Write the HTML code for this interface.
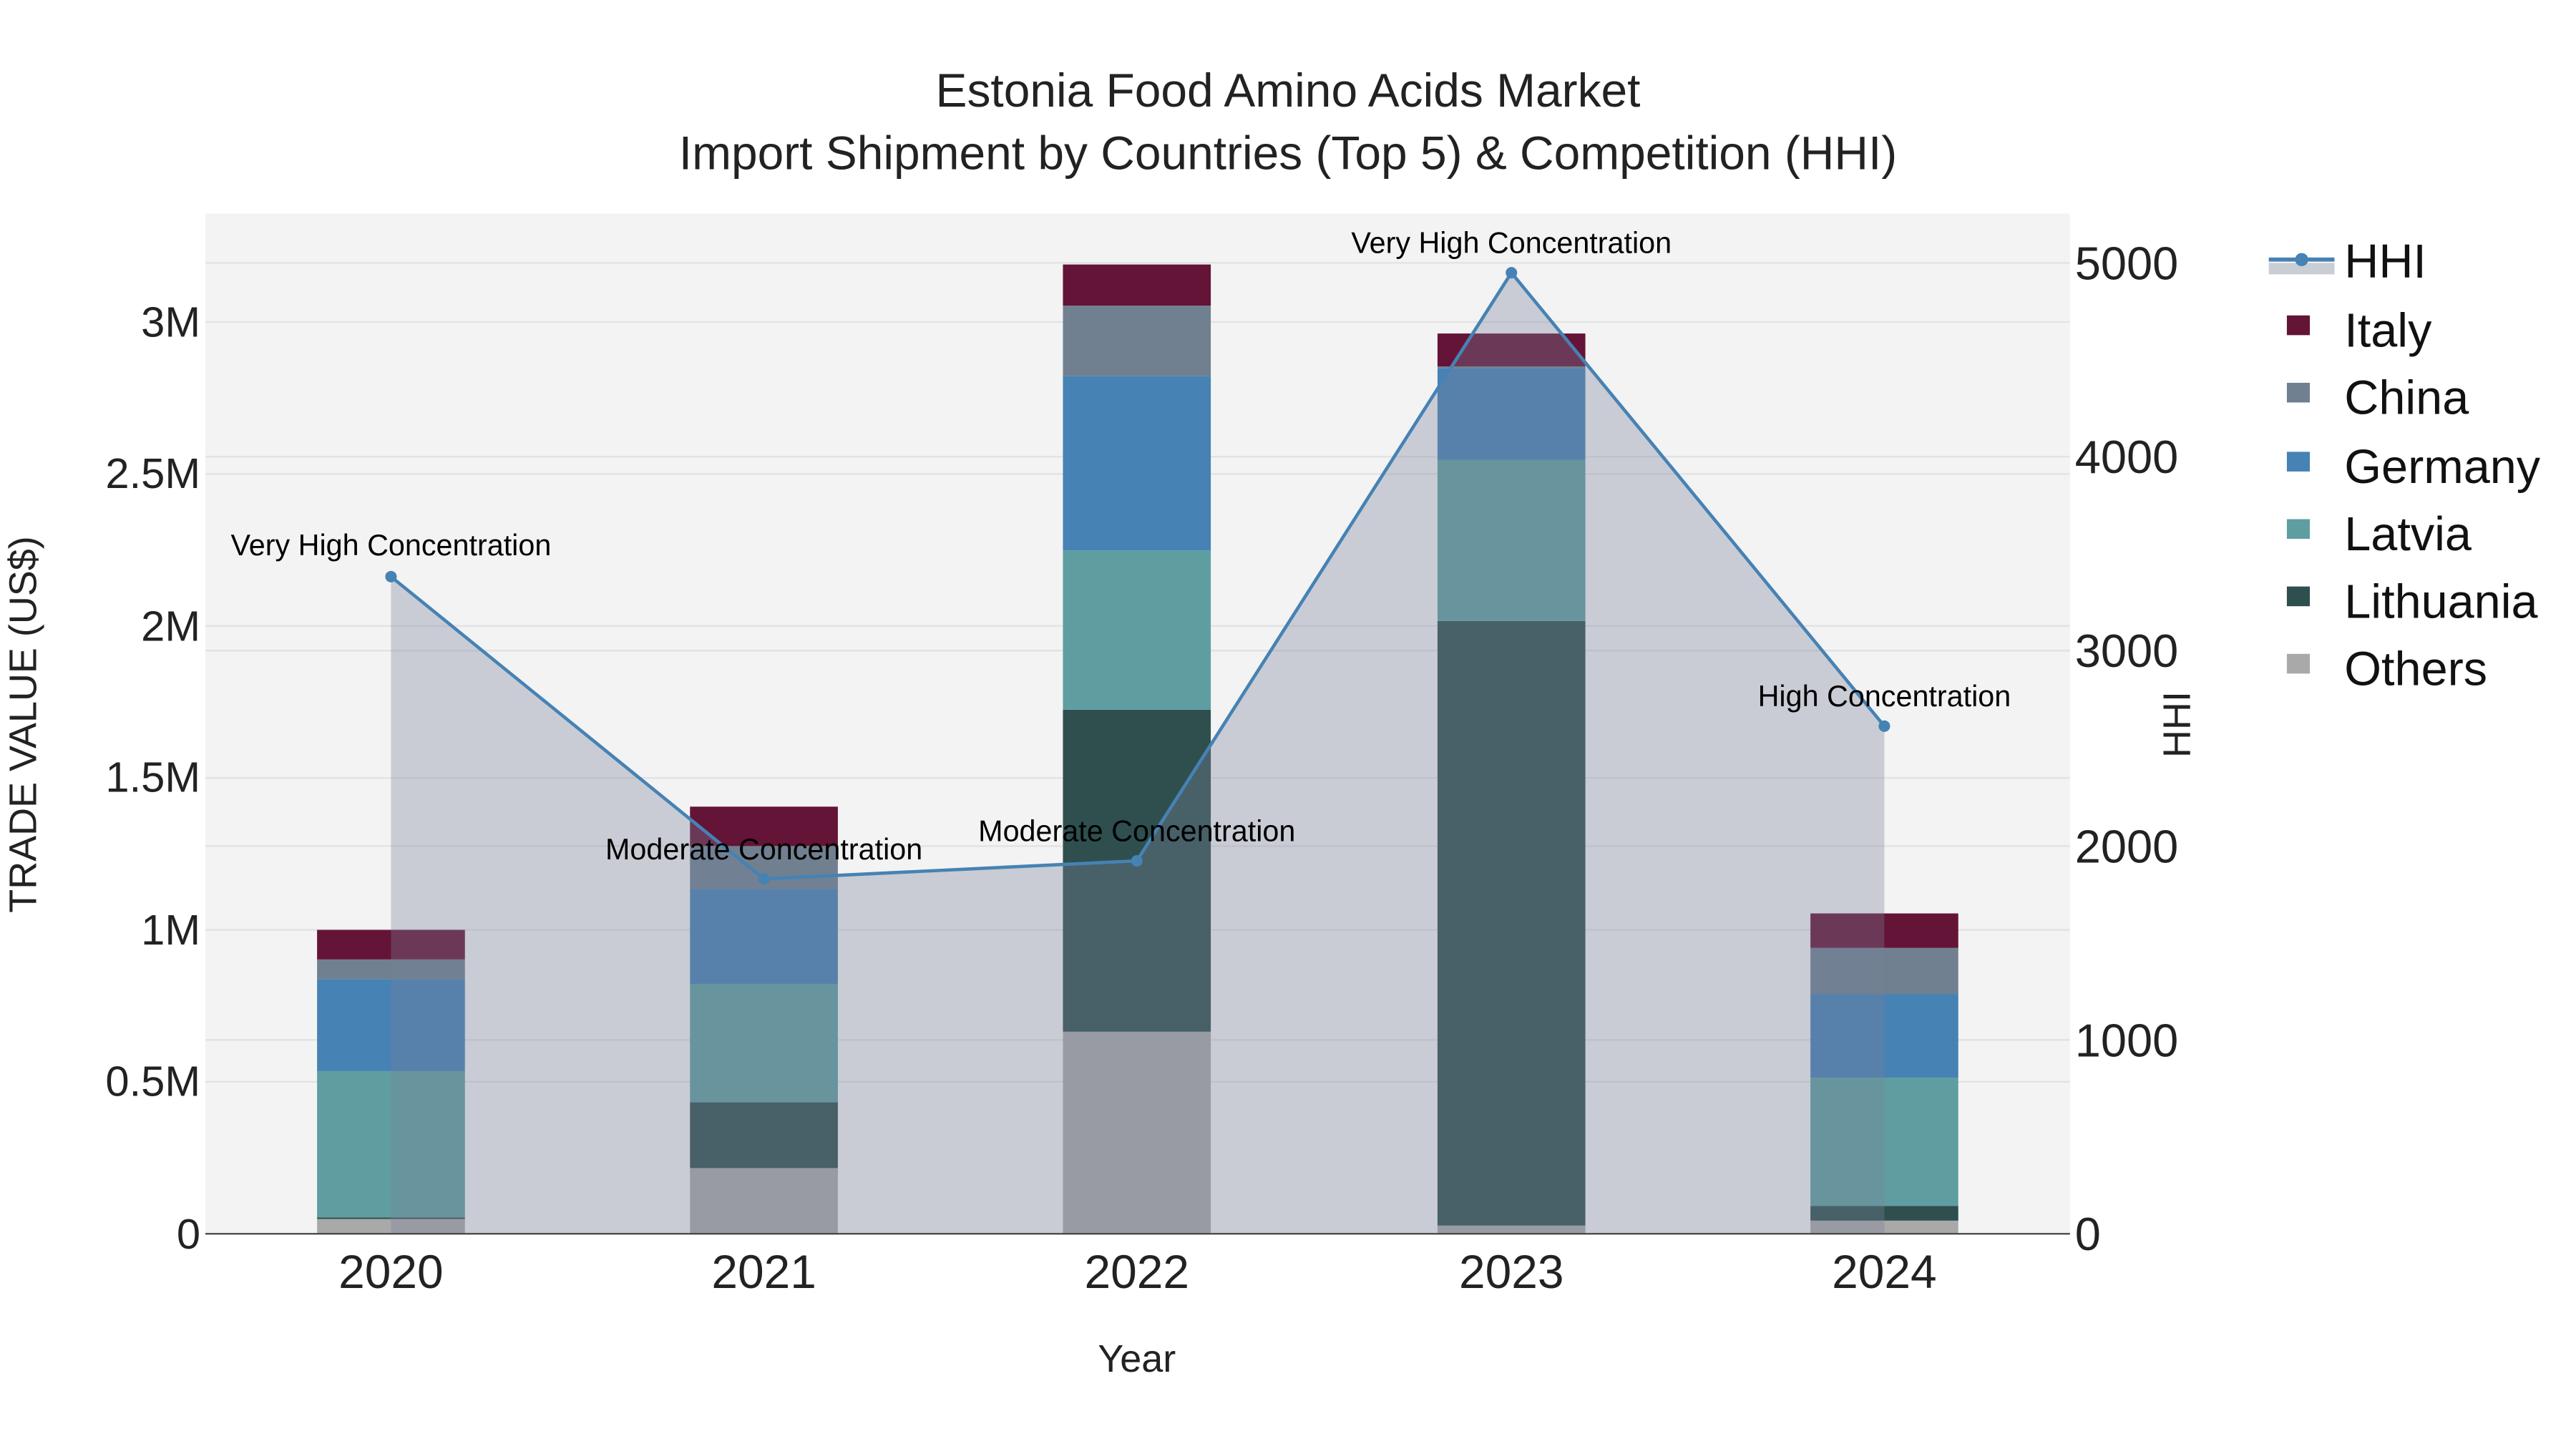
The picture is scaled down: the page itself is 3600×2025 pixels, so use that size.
<!DOCTYPE html>
<html><head><style>html,body{margin:0;padding:0;background:#fff}svg{display:block}</style></head>
<body>
<svg width="3600" height="2025" viewBox="0 0 1568 882" preserveAspectRatio="none" xmlns="http://www.w3.org/2000/svg" font-family="Liberation Sans, sans-serif">
<rect width="1568" height="882" fill="#fff"/>
<rect x="125" y="130" width="1135" height="621" fill="#f3f3f3"/>
<g stroke="#e2e2e2" stroke-width="1">
<line x1="125" x2="1260" y1="658.5" y2="658.5"/><line x1="125" x2="1260" y1="566" y2="566"/><line x1="125" x2="1260" y1="473.5" y2="473.5"/><line x1="125" x2="1260" y1="381" y2="381"/><line x1="125" x2="1260" y1="288.5" y2="288.5"/><line x1="125" x2="1260" y1="196" y2="196"/>
<line x1="125" x2="1260" y1="633" y2="633"/><line x1="125" x2="1260" y1="515" y2="515"/><line x1="125" x2="1260" y1="396" y2="396"/><line x1="125" x2="1260" y1="278" y2="278"/><line x1="125" x2="1260" y1="160" y2="160"/>
</g>
<g>
<rect x="193" y="742" width="90" height="9" fill="#a9a9a9"/><rect x="193" y="741" width="90" height="1" fill="#2f4f4f"/><rect x="193" y="652" width="90" height="89" fill="#5f9ea0"/><rect x="193" y="596" width="90" height="56" fill="#4682b4"/><rect x="193" y="584" width="90" height="12" fill="#708090"/><rect x="193" y="566" width="90" height="18" fill="#641436"/>
<rect x="420" y="711" width="90" height="40" fill="#a9a9a9"/><rect x="420" y="671" width="90" height="40" fill="#2f4f4f"/><rect x="420" y="599" width="90" height="72" fill="#5f9ea0"/><rect x="420" y="541" width="90" height="58" fill="#4682b4"/><rect x="420" y="515" width="90" height="26" fill="#708090"/><rect x="420" y="491" width="90" height="24" fill="#641436"/>
<rect x="647" y="628" width="90" height="123" fill="#a9a9a9"/><rect x="647" y="432" width="90" height="196" fill="#2f4f4f"/><rect x="647" y="335" width="90" height="97" fill="#5f9ea0"/><rect x="647" y="229" width="90" height="106" fill="#4682b4"/><rect x="647" y="186" width="90" height="43" fill="#708090"/><rect x="647" y="161" width="90" height="25" fill="#641436"/>
<rect x="875" y="746" width="90" height="5" fill="#a9a9a9"/><rect x="875" y="378" width="90" height="368" fill="#2f4f4f"/><rect x="875" y="280" width="90" height="98" fill="#5f9ea0"/><rect x="875" y="224" width="90" height="56" fill="#4682b4"/><rect x="875" y="223" width="90" height="1" fill="#708090"/><rect x="875" y="203" width="90" height="20" fill="#641436"/>
<rect x="1102" y="743" width="90" height="8" fill="#a9a9a9"/><rect x="1102" y="734" width="90" height="9" fill="#2f4f4f"/><rect x="1102" y="656" width="90" height="78" fill="#5f9ea0"/><rect x="1102" y="605" width="90" height="51" fill="#4682b4"/><rect x="1102" y="577" width="90" height="28" fill="#708090"/><rect x="1102" y="556" width="90" height="21" fill="#641436"/>
</g>
<polygon points="238,751 238,351 465,535 692,524 920,166 1147,442 1147,751" fill="#778297" fill-opacity="0.34"/>
<polyline points="238,351 465,535 692,524 920,166 1147,442" fill="none" stroke="#4682b4" stroke-width="2"/>
<g fill="#4682b4"><circle cx="238" cy="351" r="3.5"/><circle cx="465" cy="535" r="3.5"/><circle cx="692" cy="524" r="3.5"/><circle cx="920" cy="166" r="3.5"/><circle cx="1147" cy="442" r="3.5"/></g>
<line x1="125" x2="1260" y1="751" y2="751" stroke="#444" stroke-width="1"/>
<g font-size="18" fill="#000" text-anchor="middle">
<text x="238" y="338">Very High Concentration</text>
<text x="465" y="523">Moderate Concentration</text>
<text x="692" y="512">Moderate Concentration</text>
<text x="920" y="154">Very High Concentration</text>
<text x="1147" y="430">High Concentration</text>
</g>
<g font-size="28.7" fill="#222" text-anchor="middle">
<text x="784" y="65">Estonia Food Amino Acids Market</text>
<text x="784" y="103">Import Shipment by Countries (Top 5) &amp; Competition (HHI)</text>
</g>
<g font-size="26" fill="#222" text-anchor="end">
<text x="122" y="760">0</text><text x="122" y="667">0.5M</text><text x="122" y="575">1M</text><text x="122" y="482">1.5M</text><text x="122" y="390">2M</text><text x="122" y="297">2.5M</text><text x="122" y="205">3M</text>
</g>
<g font-size="28.3" fill="#222" text-anchor="start">
<text x="1263" y="761">0</text><text x="1263" y="643">1000</text><text x="1263" y="525">2000</text><text x="1263" y="406">3000</text><text x="1263" y="288">4000</text><text x="1263" y="170">5000</text>
</g>
<g font-size="28.7" fill="#222" text-anchor="middle">
<text x="238" y="784">2020</text><text x="465" y="784">2021</text><text x="692" y="784">2022</text><text x="920" y="784">2023</text><text x="1147" y="784">2024</text>
</g>
<text x="692" y="835" font-size="23.5" fill="#222" text-anchor="middle">Year</text>
<text transform="translate(22,441) rotate(-90)" font-size="23.5" fill="#222" text-anchor="middle">TRADE VALUE (US$)</text>
<text transform="translate(1333,441) rotate(-90)" font-size="23.5" fill="#222" text-anchor="middle">HHI</text>
<rect x="1381" y="160" width="40" height="7" fill="#c9cdd4"/>
<line x1="1381" x2="1421" y1="158" y2="158" stroke="#4682b4" stroke-width="2.5"/>
<circle cx="1401" cy="158" r="4" fill="#4682b4"/>
<g font-size="29" fill="#111">
<text x="1427" y="169">HHI</text><text x="1427" y="211">Italy</text><text x="1427" y="252">China</text><text x="1427" y="294">Germany</text><text x="1427" y="335">Latvia</text><text x="1427" y="376">Lithuania</text><text x="1427" y="417">Others</text>
</g>
<rect x="1392" y="192" width="14" height="12" fill="#641436"/>
<rect x="1392" y="233" width="14" height="12" fill="#708090"/>
<rect x="1392" y="275" width="14" height="12" fill="#4682b4"/>
<rect x="1392" y="316" width="14" height="12" fill="#5f9ea0"/>
<rect x="1392" y="357" width="14" height="12" fill="#2f4f4f"/>
<rect x="1392" y="398" width="14" height="12" fill="#a9a9a9"/>
</svg>
</body></html>
